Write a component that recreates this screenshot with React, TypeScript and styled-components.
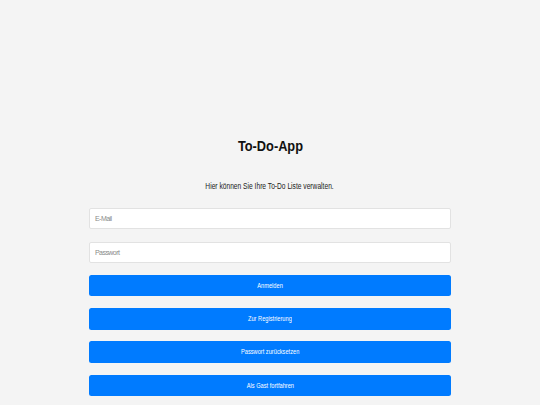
import React from "react";
import styled, { createGlobalStyle } from "styled-components";

const GlobalStyle = createGlobalStyle`
  html, body {
    margin: 0;
    padding: 0;
    background: #f4f4f4;
  }
  body {
    font-family: "Liberation Sans", Arial, Helvetica, sans-serif;
  }
`;

const Page = styled.main`
  min-height: 405px;
  display: flex;
  justify-content: center;
  padding-top: 137px;
  box-sizing: border-box;
`;

const Panel = styled.section`
  width: 362px;
  display: flex;
  flex-direction: column;
  align-items: stretch;
`;

/* The reference uses a condensed grotesque; squeeze the sans horizontally */
const Narrow = styled.span<{ $squeeze: number }>`
  display: inline-block;
  white-space: nowrap;
  transform: scaleX(${(p) => p.$squeeze});
  transform-origin: center;
`;

const Title = styled.h1`
  margin: 0;
  font-size: 15.5px;
  line-height: 18px;
  font-weight: 700;
  color: #111;
  text-align: center;
`;

const Subtitle = styled.p`
  margin: 25px 0 16px;
  font-size: 9.2px;
  line-height: 12px;
  color: #222;
  text-align: center;
`;

const Form = styled.form`
  display: flex;
  flex-direction: column;
  gap: 11.8px;
`;

const Fields = styled.div`
  display: flex;
  flex-direction: column;
  gap: 13px;
`;

const Field = styled.input`
  height: 21px;
  box-sizing: border-box;
  border: 1px solid #e2e2e2;
  border-radius: 2px;
  background: #fff;
  padding: 0 5px;
  font-family: inherit;
  font-size: 7px;
  letter-spacing: -0.55px;
  color: #333;
  outline: none;
  &::placeholder {
    color: #8a8a8a;
  }
`;

const Action = styled.button`
  height: 21.5px;
  box-sizing: border-box;
  border: none;
  border-radius: 2.5px;
  background: #007bff;
  color: #fff;
  font-family: inherit;
  font-size: 8px;
  line-height: 21.5px;
  cursor: pointer;
  padding: 0;
  text-align: center;
`;

const actions = [
  { label: "Anmelden", type: "submit" as const },
  { label: "Zur Registrierung", type: "button" as const },
  { label: "Passwort zurücksetzen", type: "button" as const },
  { label: "Als Gast fortfahren", type: "button" as const },
];

export default function App() {
  return (
    <>
      <GlobalStyle />
      <Page>
        <Panel>
          <Title>
            <Narrow $squeeze={0.825}>To-Do-App</Narrow>
          </Title>
          <Subtitle>
            <Narrow $squeeze={0.725}>Hier können Sie Ihre To-Do Liste verwalten.</Narrow>
          </Subtitle>
          <Form onSubmit={(e) => e.preventDefault()}>
            <Fields>
              <Field type="email" placeholder="E-Mail" />
              <Field type="password" placeholder="Passwort" />
            </Fields>
            {actions.map((a) => (
              <Action key={a.label} type={a.type}>
                <Narrow $squeeze={0.71}>{a.label}</Narrow>
              </Action>
            ))}
          </Form>
        </Panel>
      </Page>
    </>
  );
}
